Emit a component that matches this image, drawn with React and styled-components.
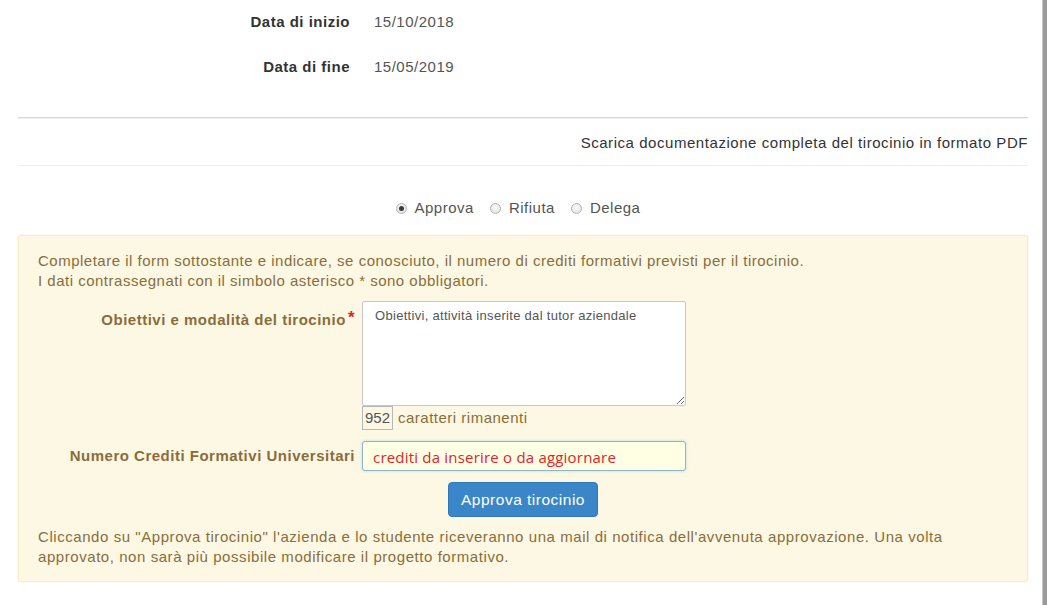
import React from "react";
import styled, { createGlobalStyle } from "styled-components";

const Global = createGlobalStyle`
  html, body { margin: 0; padding: 0; background: #fff; }
  body {
    font-family: "Liberation Sans", Arial, sans-serif;
    font-size: 15px;
    letter-spacing: 0.5px;
    line-height: 20px;
    color: #333;
  }
`;

const Frame = styled.div`
  display: flex;
  width: 1047px;
  min-height: 605px;
`;

const Main = styled.main`
  flex: 1;
  padding: 12px 14px 0 18px;
  display: flex;
  flex-direction: column;
`;

const EdgeBar = styled.div`
  width: 4px;
  background: #9a9a9a;
  border-left: 1px solid #c8c8c8;
`;

const InfoList = styled.dl`
  margin: 0 0 40px;
  display: grid;
  grid-template-columns: 332px 1fr;
  column-gap: 24px;
  row-gap: 25px;
`;

const InfoLabel = styled.dt`
  font-weight: bold;
  text-align: right;
  color: #333;
`;

const InfoValue = styled.dd`
  margin: 0;
  color: #555;
`;

const Rule = styled.hr`
  margin: 0;
  border: 0;
  border-top: 1px solid ${(p) => (p.$strong ? "#d8d8d8" : "#eeeeee")};
  box-shadow: ${(p) => (p.$strong ? "0 1px 0 #f0f0f0" : "none")};
`;

const DownloadRow = styled.div`
  text-align: right;
  padding: 15px 0 12px;
  letter-spacing: 0.55px;
  color: #333;
`;

const RadioGroup = styled.div`
  display: flex;
  justify-content: center;
  align-items: center;
  padding: 32px 10px 17px 0;
  color: #555;
`;

const RadioLabel = styled.label`
  display: inline-flex;
  align-items: center;
  margin-right: 16px;
  &:last-child { margin-right: 0; }
`;

const RadioDot = styled.span`
  width: 11px;
  height: 11px;
  border-radius: 50%;
  box-sizing: border-box;
  border: 1px solid #b5b5b5;
  background: radial-gradient(circle at 50% 40%, #fafafa 0%, #dedede 100%);
  margin-right: 8px;
  position: relative;
  &::after {
    content: "";
    display: ${(p) => (p.$checked ? "block" : "none")};
    position: absolute;
    left: 2px;
    top: 2px;
    width: 5px;
    height: 5px;
    border-radius: 50%;
    background: #3c3c3c;
  }
`;

const Panel = styled.section`
  background: #fcf8e3;
  border: 1px solid #f6ecc8;
  border-radius: 3px;
  padding: 15px 19px 14px;
  color: #8a6d3b;
  box-shadow: 0 0 2px rgba(200, 190, 150, 0.3);
`;

const Intro = styled.p`
  margin: 0 0 10px;
`;

const FormRow = styled.div`
  display: grid;
  grid-template-columns: 317px 324px;
  column-gap: 7px;
  align-items: ${(p) => (p.$center ? "center" : "start")};
  margin-bottom: ${(p) => p.$mb || 0}px;
`;

const FieldLabel = styled.label`
  font-weight: bold;
  text-align: right;
  padding-top: ${(p) => p.$pt || 0}px;
`;

const Required = styled.span`
  color: #e02424;
  margin-left: 2px;
  font-size: 17px;
  vertical-align: 2px;
`;

const TextArea = styled.textarea`
  box-sizing: border-box;
  width: 324px;
  height: 105px;
  display: block;
  resize: vertical;
  border: 1px solid #c8c8c8;
  border-radius: 2px;
  background: #fff;
  padding: 6px 12px;
  font-family: "Liberation Sans", Arial, sans-serif;
  font-size: 13px;
  letter-spacing: 0.3px;
  color: #555;
  outline: none;
`;

const Counter = styled.div`
  display: flex;
  align-items: center;
  height: 24px;
`;

const CounterBox = styled.span`
  box-sizing: border-box;
  height: 24px;
  width: 31px;
  border: 1px solid #b8b8b8;
  display: inline-flex;
  align-items: center;
  justify-content: center;
  color: #555;
  letter-spacing: 0;
  margin-right: 5px;
`;

const TextInput = styled.input`
  box-sizing: border-box;
  width: 324px;
  height: 30px;
  border: 1px solid #8fb5c9;
  border-radius: 3px;
  background: #ffffe3;
  box-shadow: 0 0 3px rgba(102, 175, 233, 0.45);
  padding: 1px 10px 0;
  font-family: "Open Sans", sans-serif;
  font-size: 15px;
  letter-spacing: 0.2px;
  outline: none;
  &::placeholder { color: #e0242b; opacity: 1; }
`;

const ButtonRow = styled.div`
  display: flex;
  justify-content: center;
  margin: 11px 0 10px;
`;

const Button = styled.button`
  width: 150px;
  height: 35px;
  background: #3a86c8;
  border: 1px solid #3079b8;
  border-radius: 4px;
  color: #fff;
  font-family: "Liberation Sans", Arial, sans-serif;
  font-size: 15.5px;
  letter-spacing: 0.5px;
  cursor: pointer;
`;

const Note = styled.p`
  margin: 0;
  letter-spacing: 0.56px;
`;

export default function App() {
  return (
    <>
      <Global />
      <Frame>
        <Main>
          <InfoList>
            <InfoLabel>Data di inizio</InfoLabel>
            <InfoValue>15/10/2018</InfoValue>
            <InfoLabel>Data di fine</InfoLabel>
            <InfoValue>15/05/2019</InfoValue>
          </InfoList>
          <Rule $strong />
          <DownloadRow>Scarica documentazione completa del tirocinio in formato PDF</DownloadRow>
          <Rule />
          <RadioGroup>
            <RadioLabel><RadioDot $checked />Approva</RadioLabel>
            <RadioLabel><RadioDot />Rifiuta</RadioLabel>
            <RadioLabel><RadioDot />Delega</RadioLabel>
          </RadioGroup>
          <Panel>
            <Intro>
              Completare il form sottostante e indicare, se conosciuto, il numero di crediti formativi previsti per il tirocinio.
              <br />
              I dati contrassegnati con il simbolo asterisco * sono obbligatori.
            </Intro>
            <FormRow $mb={11}>
              <FieldLabel $pt={7}>
                Obiettivi e modalità del tirocinio<Required>*</Required>
              </FieldLabel>
              <div>
                <TextArea defaultValue="Obiettivi, attività inserite dal tutor aziendale" />
                <Counter>
                  <CounterBox>952</CounterBox>caratteri rimanenti
                </Counter>
              </div>
            </FormRow>
            <FormRow $center>
              <FieldLabel>Numero Crediti Formativi Universitari</FieldLabel>
              <TextInput placeholder="crediti da inserire o da aggiornare" />
            </FormRow>
            <ButtonRow>
              <Button>Approva tirocinio</Button>
            </ButtonRow>
            <Note>
              Cliccando su "Approva tirocinio" l'azienda e lo studente riceveranno una mail di notifica dell'avvenuta approvazione. Una volta approvato, non sarà più possibile modificare il progetto formativo.
            </Note>
          </Panel>
        </Main>
        <EdgeBar />
      </Frame>
    </>
  );
}
